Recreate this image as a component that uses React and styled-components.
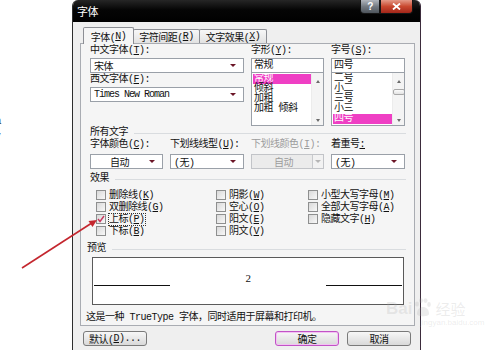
import React from "react";
import styled, { createGlobalStyle } from "styled-components";

const GlobalStyle = createGlobalStyle`
  html, body {
    margin: 0;
    padding: 0;
    background: #ffffff;
  }
`;

const Page = styled.div`
  position: relative;
  display: flex;
  width: 500px;
  height: 350px;
  overflow: hidden;
  background: #ffffff;
`;

const Gutter = styled.div`
  width: 72px;
  flex: none;
  overflow: hidden;
  padding-top: 113px;
  box-sizing: border-box;
  font: 11px/15px "Liberation Sans", sans-serif;
  color: #333;
`;

const GutterLine = styled.div`
  margin-left: -5px;
`;

const Dialog = styled.div`
  width: 349px;
  flex: none;
  display: flex;
  flex-direction: column;
  box-sizing: border-box;
  background: #efefef;
  border-left: 1px solid #2e2e2e;
  border-right: 1px solid #3b2b3b;
  border-radius: 6px 6px 0 0;
  overflow: hidden;
  font-family: "Liberation Mono", "Noto Sans CJK SC", monospace;
  font-size: 10px;
  letter-spacing: -0.5px;
  color: #111;
`;

const TitleBar = styled.div`
  height: 22px;
  flex: none;
  display: flex;
  align-items: flex-start;
  padding-right: 7px;
  background: linear-gradient(#262626, #050505 45%, #000);
`;

const Title = styled.div`
  flex: 1;
  padding: 4px 0 0 4px;
  font: 11px/14px "Noto Sans CJK SC", sans-serif;
  color: #ffffff;
`;

const CaptionButton = styled.div`
  width: ${(p) => p.$w}px;
  height: 14px;
  box-sizing: border-box;
  display: flex;
  align-items: center;
  justify-content: center;
  border: 1px solid #151515;
  border-top: none;
  border-radius: ${(p) => (p.$close ? "0 0 4px 0" : "0 0 0 4px")};
  color: #ffffff;
  font: bold 10px/1 "Liberation Sans", sans-serif;
  background: ${(p) =>
    p.$close
      ? "linear-gradient(#e49a88, #c9482f 50%, #a3261a)"
      : "linear-gradient(#b0b5bc, #737a82 50%, #4f555c)"};
`;

const Body = styled.div`
  flex: 1;
  display: flex;
  flex-direction: column;
  padding: 5px 5px 0 7px;
`;

const TabRow = styled.div`
  position: relative;
  z-index: 1;
  display: flex;
  align-items: flex-end;
  height: 16px;
  padding-left: 3px;
`;

const Tab = styled.div`
  width: ${(p) => p.$w}px;
  height: ${(p) => (p.$active ? 17 : 14)}px;
  margin-bottom: ${(p) => (p.$active ? -1 : 0)}px;
  margin-right: -1px;
  box-sizing: border-box;
  display: flex;
  align-items: center;
  justify-content: center;
  white-space: nowrap;
  border: 1px solid #8c8e94;
  border-bottom: none;
  border-radius: 2px 2px 0 0;
  background: ${(p) =>
    p.$active ? "#f5f5f5" : "linear-gradient(#f7f7f7, #e2e2e2)"};
`;

const Panel = styled.div`
  display: flex;
  flex-direction: column;
  border: 1px solid #a9acb2;
  background: #f5f5f5;
  padding: 0 8px 1px 9px;
`;

const FontGrid = styled.div`
  display: grid;
  grid-template-columns: 154px 73px 74px;
  column-gap: 7px;
`;

const Column = styled.div`
  display: flex;
  flex-direction: column;
`;

const FieldLabel = styled.div`
  height: ${(p) => p.$h || 14}px;
  line-height: ${(p) => p.$h || 14}px;
  white-space: nowrap;
  color: ${(p) => (p.$disabled ? "#9c9c9c" : "#111")};
`;

const Combo = styled.div`
  height: 15px;
  margin-top: ${(p) => p.$top || 0}px;
  box-sizing: border-box;
  display: flex;
  align-items: center;
  padding-left: 3px;
  border: 1px solid ${(p) => (p.$disabled ? "#c2c4c8" : "#9aa0a8")};
  background: ${(p) => (p.$disabled ? "#ebebeb" : "#ffffff")};
  color: ${(p) => (p.$disabled ? "#9c9c9c" : "#111")};
`;

const ComboText = styled.span`
  flex: 1;
  overflow: hidden;
  white-space: nowrap;
  text-align: ${(p) => (p.$center ? "center" : "left")};
  letter-spacing: ${(p) => (p.$latin ? "-1px" : "-0.5px")};
`;

const ComboArrow = styled.span`
  width: 0;
  height: 0;
  margin: 0 7px 0 4px;
  border-left: 3px solid transparent;
  border-right: 3px solid transparent;
  border-top: 3px solid #6b1526;
`;

const DropButton = styled.span`
  align-self: stretch;
  width: 10px;
  display: flex;
  align-items: center;
  justify-content: center;
  border-left: 1px solid #c8cacd;
  background: #f2f2f2;

  &::after {
    content: "";
    border-left: 3px solid transparent;
    border-right: 3px solid transparent;
    border-top: 3px solid #b5b5b5;
  }
`;

const TextField = styled.div`
  height: 15px;
  box-sizing: border-box;
  padding-left: 2px;
  line-height: 13px;
  border: 1px solid #9aa0a8;
  background: #ffffff;
`;

const List = styled.div`
  height: 54px;
  margin-top: -1px;
  box-sizing: border-box;
  display: flex;
  overflow: hidden;
  border: 1px solid #9aa0a8;
  background: #ffffff;
`;

const ListItems = styled.div`
  flex: 1;
  display: flex;
  flex-direction: column;
  padding: 1px 0 0 1px;
`;

const ListItem = styled.div`
  flex: none;
  height: 10px;
  line-height: 10px;
  padding-left: 1px;
  white-space: pre;
  background: ${(p) => (p.$selected ? "#ef3fc4" : "transparent")};
  color: ${(p) => (p.$selected ? "#ffffff" : "#111")};
`;

const Scrollbar = styled.div`
  width: 12px;
  flex: none;
  display: flex;
  flex-direction: column;
  align-items: center;
  padding: 7px 0 3px;
  box-sizing: border-box;
  background: #f4f4f4;
  border-left: 1px solid #ececec;
`;

const ScrollArrow = styled.span`
  width: 0;
  height: 0;
  border-left: 2.5px solid transparent;
  border-right: 2.5px solid transparent;
  ${(p) => (p.$down ? "border-top" : "border-bottom")}: 3px solid #6a6a6a;
  ${(p) => p.$down && "margin-top: auto;"}
`;

const Thumb = styled.span`
  width: 10px;
  height: 4px;
  margin-top: 6px;
  border: 1px solid #a8a8a8;
  border-radius: 2px;
  background: linear-gradient(#fbfbfb, #e3e3e3);
`;

const GroupHeader = styled.div`
  display: flex;
  align-items: center;
  gap: 6px;
  height: 12px;
  line-height: 12px;
  margin-top: ${(p) => p.$top}px;
  margin-left: ${(p) => p.$indent || 0}px;

  &::after {
    content: "";
    flex: 1;
    height: 1px;
    background: #d9dcdf;
  }
`;

const OptionGrid = styled.div`
  display: grid;
  grid-template-columns: 73px 74px 73px 74px;
  column-gap: 7px;
`;

const Effects = styled.div`
  display: grid;
  grid-auto-flow: column;
  grid-template-rows: repeat(4, 12px);
  grid-template-columns: 120px 92px 1fr;
  margin: 4px 0 0 6px;
`;

const Check = styled.div`
  display: flex;
  align-items: center;
  gap: 3px;
  white-space: nowrap;
`;

const Box = styled.span`
  width: 10px;
  height: 10px;
  box-sizing: border-box;
  display: flex;
  align-items: center;
  justify-content: center;
  border: 1px solid #8e8f8f;
  background: linear-gradient(135deg, #d9d9d9, #f8f8f8);
`;

const CheckText = styled.span`
  line-height: 11px;
  ${(p) => p.$focus && "outline: 1px dotted #333; outline-offset: 0;"}
`;

const Preview = styled.div`
  height: 48px;
  margin: 2px 2px 0;
  box-sizing: border-box;
  display: flex;
  align-items: flex-start;
  padding: 0 1px;
  border: 1px solid #5a5a5a;
  background: #ffffff;
`;

const Baseline = styled.div`
  width: 76px;
  height: 27px;
  border-bottom: 1px solid #111;
`;

const Sample = styled.div`
  flex: 1;
  padding-top: 14px;
  text-align: center;
  font: 11px/12px "Liberation Serif", serif;
`;

const Description = styled.div`
  margin: 7px 0 0 -4px;
  line-height: 12px;
  white-space: nowrap;
`;

const ButtonRow = styled.div`
  display: flex;
  gap: 8px;
  margin-top: 5px;
  padding: 0 4px 0 3px;
`;

const Button = styled.div`
  width: 64px;
  height: 15px;
  box-sizing: border-box;
  display: flex;
  align-items: center;
  justify-content: center;
  border: 1px solid ${(p) => (p.$default ? "#c153c6" : "#7a7a7a")};
  border-radius: 3px;
  background: linear-gradient(#f7f7f7, #e8e8e8 50%, #d9d9d9);
  ${(p) => p.$push && "margin-left: auto;"}
  ${(p) => p.$default && "box-shadow: inset 0 0 0 1px #f3c2f3;"}
`;

const Overlay = styled.svg`
  position: absolute;
  left: 0;
  top: 0;
  pointer-events: none;
`;

const Watermark = styled.div`
  position: absolute;
  left: 386px;
  top: 298px;
  display: flex;
  flex-direction: column;
  color: rgba(170, 170, 170, 0.22);
  pointer-events: none;
`;

const MarkRow = styled.div`
  display: flex;
  align-items: flex-end;
  gap: 2px;
`;

const MarkBig = styled.span`
  font: bold 17px/18px "Liberation Sans", sans-serif;
`;

const MarkCn = styled.span`
  font: 15px/18px "Noto Sans CJK SC", sans-serif;
  margin-left: 2px;
`;

const MarkUrl = styled.span`
  margin-left: 34px;
  font: 8px/10px "Liberation Sans", sans-serif;
`;

const Key = ({ k }) => (
  <>
    (<u>{k}</u>)
  </>
);

const Arrow = () => <ComboArrow />;

const effects = [
  { label: "删除线", k: "K" },
  { label: "双删除线", k: "G" },
  { label: "上标", k: "P", checked: true },
  { label: "下标", k: "B" },
  { label: "阴影", k: "W" },
  { label: "空心", k: "O" },
  { label: "阳文", k: "E" },
  { label: "阴文", k: "V" },
  { label: "小型大写字母", k: "M" },
  { label: "全部大写字母", k: "A" },
  { label: "隐藏文字", k: "H" },
];

const styles = ["常规", "倾斜", "加粗", "加粗 倾斜"];
const sizes = ["二号", "小二", "三号", "小三", "四号"];

export default function App() {
  return (
    <Page>
      <GlobalStyle />
      <Gutter>
        <GutterLine>a</GutterLine>
        <GutterLine>y</GutterLine>
      </Gutter>

      <Dialog>
        <TitleBar>
          <Title>字体</Title>
          <CaptionButton $w={20}>?</CaptionButton>
          <CaptionButton $w={33} $close>
            <svg width="9" height="7" viewBox="0 0 9 7">
              <path d="M1 0.5 L8 6.5 M8 0.5 L1 6.5" stroke="#fff" strokeWidth="1.8" />
            </svg>
          </CaptionButton>
        </TitleBar>

        <Body>
          <TabRow>
            <Tab $w={51} $active>
              字体<Key k="N" />
            </Tab>
            <Tab $w={67}>
              字符间距<Key k="R" />
            </Tab>
            <Tab $w={68}>
              文字效果<Key k="X" />
            </Tab>
          </TabRow>

          <Panel>
            <FontGrid>
              <Column>
                <FieldLabel>
                  中文字体<Key k="T" />:
                </FieldLabel>
                <Combo>
                  <ComboText>宋体</ComboText>
                  <Arrow />
                </Combo>
                <FieldLabel>
                  西文字体<Key k="F" />:
                </FieldLabel>
                <Combo>
                  <ComboText $latin>Times New Roman</ComboText>
                  <Arrow />
                </Combo>
              </Column>

              <Column>
                <FieldLabel>
                  字形<Key k="Y" />:
                </FieldLabel>
                <TextField>常规</TextField>
                <List>
                  <ListItems>
                    {styles.map((s, i) => (
                      <ListItem key={s} $selected={i === 0}>
                        {s}
                      </ListItem>
                    ))}
                  </ListItems>
                  <Scrollbar>
                    <ScrollArrow />
                    <ScrollArrow $down />
                  </Scrollbar>
                </List>
              </Column>

              <Column>
                <FieldLabel>
                  字号<Key k="S" />:
                </FieldLabel>
                <TextField>四号</TextField>
                <List>
                  <ListItems>
                    {sizes.map((s, i) => (
                      <ListItem key={s} $selected={i === sizes.length - 1}>
                        {s}
                      </ListItem>
                    ))}
                  </ListItems>
                  <Scrollbar>
                    <ScrollArrow />
                    <Thumb />
                    <ScrollArrow $down />
                  </Scrollbar>
                </List>
              </Column>
            </FontGrid>

            <GroupHeader $top={1}>所有文字</GroupHeader>
            <OptionGrid>
              <Column>
                <FieldLabel $h={12}>
                  字体颜色<Key k="C" />:
                </FieldLabel>
                <Combo $top={3}>
                  <ComboText $center>自动</ComboText>
                  <Arrow />
                </Combo>
              </Column>
              <Column>
                <FieldLabel $h={12}>
                  下划线线型<Key k="U" />:
                </FieldLabel>
                <Combo $top={3}>
                  <ComboText>(无)</ComboText>
                  <Arrow />
                </Combo>
              </Column>
              <Column>
                <FieldLabel $h={12} $disabled>
                  下划线颜色<Key k="I" />:
                </FieldLabel>
                <Combo $top={3} $disabled>
                  <ComboText $center>自动</ComboText>
                  <DropButton />
                </Combo>
              </Column>
              <Column>
                <FieldLabel $h={12}>
                  着重号<u>:</u>
                </FieldLabel>
                <Combo $top={3}>
                  <ComboText>(无)</ComboText>
                  <Arrow />
                </Combo>
              </Column>
            </OptionGrid>

            <GroupHeader $top={4}>效果</GroupHeader>
            <Effects>
              {effects.map((e) => (
                <Check key={e.k}>
                  <Box>
                    {e.checked && (
                      <svg width="8" height="8" viewBox="0 0 8 8">
                        <path
                          d="M1 4 L3 6.5 L7 1"
                          fill="none"
                          stroke="#c6385f"
                          strokeWidth="1.4"
                        />
                      </svg>
                    )}
                  </Box>
                  <CheckText $focus={e.checked}>
                    {e.label}
                    <Key k={e.k} />
                  </CheckText>
                </Check>
              ))}
            </Effects>

            <GroupHeader $top={6} $indent={-3}>
              预览
            </GroupHeader>
            <Preview>
              <Baseline />
              <Sample>2</Sample>
              <Baseline />
            </Preview>
            <Description>
              这是一种 TrueType 字体，同时适用于屏幕和打印机。
            </Description>
          </Panel>

          <ButtonRow>
            <Button>
              默认<Key k="D" />...
            </Button>
            <Button $push $default>
              确定
            </Button>
            <Button>取消</Button>
          </ButtonRow>
        </Body>
      </Dialog>

      <Overlay width="500" height="350" viewBox="0 0 500 350">
        <line x1="22" y1="268" x2="91" y2="223.5" stroke="#c4262e" strokeWidth="1.6" />
        <polygon points="97,220 88.5,221 92.5,227" fill="#c4262e" />
      </Overlay>

      <Watermark>
        <MarkRow>
          <MarkBig>Bai</MarkBig>
          <svg width="17" height="20" viewBox="0 0 17 20">
            <g fill="rgba(170,170,170,0.22)">
              <ellipse cx="3" cy="6" rx="2" ry="2.6" />
              <ellipse cx="7" cy="2.6" rx="2" ry="2.4" />
              <ellipse cx="11.5" cy="2.6" rx="2" ry="2.4" />
              <ellipse cx="15" cy="6.5" rx="1.8" ry="2.4" />
              <path d="M3 16 C3 11 6 9 9 9 C12 9 15 11 15 16 C15 19 3 19 3 16 Z" />
            </g>
          </svg>
          <MarkCn>经验</MarkCn>
        </MarkRow>
        <MarkUrl>jingyan.baidu.com</MarkUrl>
      </Watermark>
    </Page>
  );
}
